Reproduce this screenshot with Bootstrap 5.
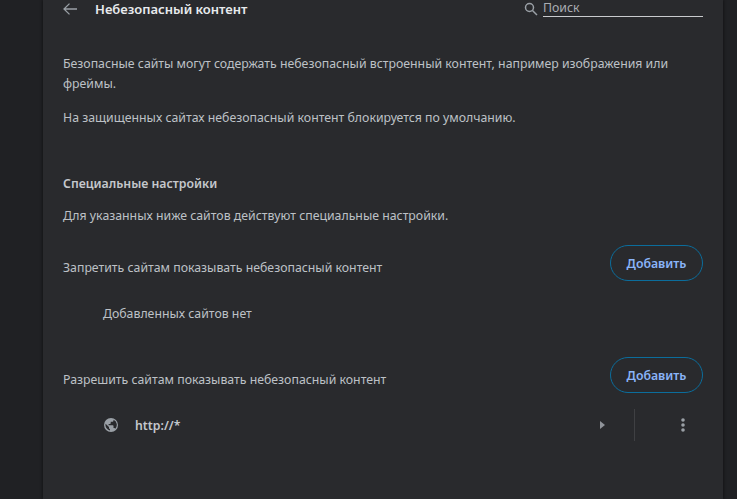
<!DOCTYPE html>
<html lang="ru">
<head>
<meta charset="utf-8">
<title>Небезопасный контент</title>
<link href="https://cdn.jsdelivr.net/npm/bootstrap@5.3.0/dist/css/bootstrap.min.css" rel="stylesheet">
<style>
html,body{height:100%;overflow:hidden}
body{background:#202124;color:#bdc1c6;font-family:"Noto Sans","Liberation Sans",sans-serif;font-size:12.3px;line-height:20px}
.panel{margin-left:43px;width:680px;height:499px;background:#292a2d;box-shadow:-1px 0 3px rgba(0,0,0,.3),1px 0 3px rgba(0,0,0,.3);padding:0 20px}
.head-bar{height:17px;margin-bottom:37px}
.head-title{font-size:13px;font-weight:600;color:#e8eaed;margin-left:18px}
.search-box{width:160px;height:17px;border-bottom:1px solid #c8cacd;color:#a9adb2;line-height:15px}
.lens{margin-right:5px}
.para{margin:0 0 14px}
.sec-title{font-weight:600;color:#c4c7cc;margin:46px 0 12px}
.add-row{height:36px}
.add-label{padding-top:10px}
.add-gap{margin-top:19px}
.add-btn{width:93px;height:36px;border:1px solid #0b6d9c;border-radius:18px;color:#8ab4f8;background:transparent;font-size:12.3px;font-weight:600;padding:2px 0 0;line-height:20px}
.empty-note{padding-left:40px;margin-top:23px;margin-bottom:33px}
.site-row{height:32px;padding-left:40px}
.site-name{font-weight:600;margin-left:16px;color:#c4c7cc;padding-top:2px}
.vsep{width:1px;height:32px;background:#3f4043;margin:0 46px 0 29px}
.caret{width:0;height:0;border-left:5px solid #8f9399;border-top:4px solid transparent;border-bottom:4px solid transparent}
.kebab{margin-right:18px}
</style>
</head>
<body>
<main class="panel">
  <div class="head-bar d-flex align-items-center">
    <svg width="14" height="12" viewBox="0 0 14 12" fill="none" stroke="#9aa0a6" stroke-width="1.3"><path d="M14 6H1M6.500.6 1 6l5.500 5.400"/></svg>
    <div class="head-title">Небезопасный контент</div>
    <div class="ms-auto d-flex align-items-center">
      <svg class="lens" width="14" height="14" viewBox="0 0 14 14" fill="none" stroke="#9aa0a6" stroke-width="1.500"><circle cx="5.500" cy="5.500" r="4"/><path d="M8.500 8.500 13 13"/></svg>
      <div class="search-box">Поиск</div>
    </div>
  </div>
  <p class="para">Безопасные сайты могут содержать небезопасный встроенный контент, например изображения или фреймы.</p>
  <p class="para">На защищенных сайтах небезопасный контент блокируется по умолчанию.</p>
  <div class="sec-title">Специальные настройки</div>
  <div>Для указанных ниже сайтов действуют специальные настройки.</div>
  <div class="add-row add-gap d-flex align-items-center justify-content-between">
    <span class="add-label">Запретить сайтам показывать небезопасный контент</span>
    <button class="btn add-btn" type="button">Добавить</button>
  </div>
  <div class="empty-note">Добавленных сайтов нет</div>
  <div class="add-row d-flex align-items-center justify-content-between">
    <span class="add-label">Разрешить сайтам показывать небезопасный контент</span>
    <button class="btn add-btn" type="button">Добавить</button>
  </div>
  <div class="site-row d-flex align-items-center mt-3">
    <svg width="16" height="16" viewBox="0 0 16 16"><path fill="#9aa0a6" fill-rule="evenodd" d="M8 1a7 7 0 1 0 0 14A7 7 0 0 0 8 1ZM2.600 6.700 6 10v1c0 .6.500 1 1 1v1.400A5.600 5.600 0 0 1 2.600 6.700Zm9.700 5c-.2-.5-.6-.8-1.100-.8h-.7V9c0-.4-.3-.7-.7-.7H5.600V6.900H7c.4 0 .7-.3.700-.7V4.800h1.400c.8 0 1.400-.6 1.400-1.400v-.6a5.600 5.600 0 0 1 1.800 8.900Z"/></svg>
    <span class="site-name">http://*</span>
    <span class="caret ms-auto"></span>
    <span class="vsep"></span>
    <svg class="kebab" width="4" height="14" viewBox="0 0 4 14" fill="#9aa0a6"><circle cx="2" cy="2" r="1.800"/><circle cx="2" cy="7" r="1.800"/><circle cx="2" cy="12" r="1.800"/></svg>
  </div>
</main>
<script src="https://cdn.jsdelivr.net/npm/bootstrap@5.3.0/dist/js/bootstrap.bundle.min.js"></script>
</body>
</html>
